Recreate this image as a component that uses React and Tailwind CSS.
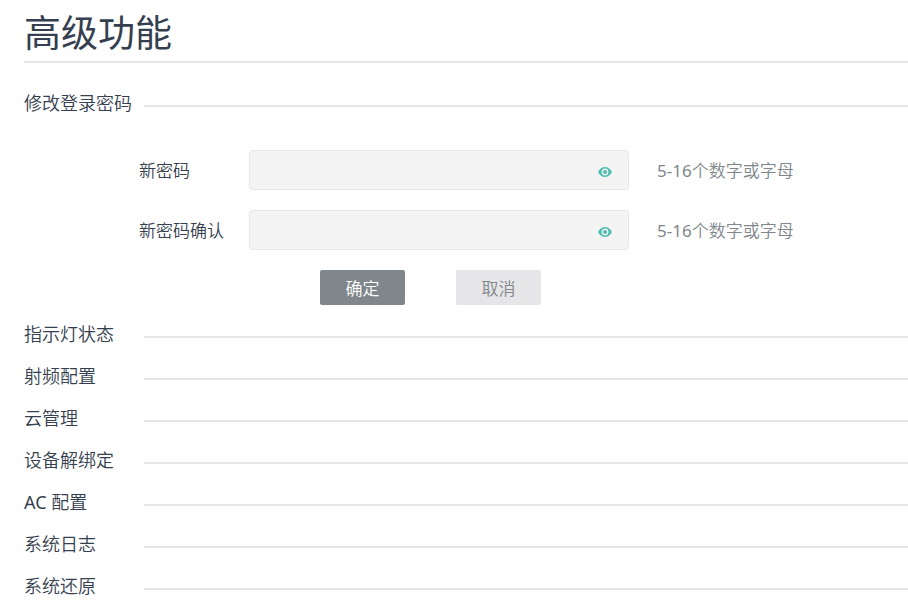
import React, { useState } from 'react';

const sections = [
  { title: '指示灯状态' },
  { title: '射频配置' },
  { title: '云管理' },
  { title: '设备解绑定' },
  { prefix: 'AC ', title: '配置' },
  { title: '系统日志' },
  { title: '系统还原' },
];

const EyeIcon = () => (
  <svg width="14" height="10" viewBox="0 0 14 10" aria-hidden="true">
    <path d="M0 5C1.8 1.7 4.2 0 7 0s5.2 1.7 7 5c-1.8 3.3-4.2 5-7 5S1.8 8.3 0 5Z" fill="#4dbdb1" />
    <circle cx="7" cy="5" r="2.7" fill="#4dbdb1" stroke="#f4f4f4" strokeWidth="1.4" />
  </svg>
);

const SectionHeader = ({ prefix, title, onClick }) => (
  <h2>
    <button type="button" onClick={onClick} className="flex h-[42px] w-full items-center text-left">
      <span className="w-30 shrink-0 pb-1.5 text-lg leading-6">
        {prefix && <span className="font-normal">{prefix}</span>}
        {title}
      </span>
      <span className="h-0.5 flex-1 bg-[#e6e6e7]" />
    </button>
  </h2>
);

const PasswordField = ({ id, label }) => {
  const [value, setValue] = useState('');
  const [visible, setVisible] = useState(false);

  return (
    <div className="flex items-center">
      <label htmlFor={id} className="w-[110px] shrink-0 pt-0.5">
        {label}
      </label>
      <div className="relative w-[380px]">
        <input
          id={id}
          type={visible ? 'text' : 'password'}
          value={value}
          onChange={(e) => setValue(e.target.value)}
          className="block h-10 w-full rounded border border-[#e6e6e7] bg-[#f4f4f4] pr-10 pl-3 outline-none"
        />
        <button
          type="button"
          aria-label={label}
          onClick={() => setVisible(!visible)}
          className="absolute top-[17px] right-[17px]"
        >
          <EyeIcon />
        </button>
      </div>
      <span className="ml-7 pt-0.5 whitespace-nowrap text-[#80878c]">
        <span className="font-normal">5-16</span>个数字或字母
      </span>
    </div>
  );
};

const App = () => {
  const [open, setOpen] = useState(true);

  return (
    <main className="min-h-screen bg-white pl-6 font-['Noto_Sans','Noto_Sans_CJK_SC',sans-serif] font-[350] text-[#353f4f]">
      <h1 className="mb-[22px] border-b-2 border-[#e6e6e7] pt-2 pb-1 text-[37px] leading-[49px] font-normal">
        高级功能
      </h1>

      <SectionHeader title="修改登录密码" onClick={() => setOpen(!open)} />
      {open && (
        <form
          className="flex flex-col gap-5 pt-[23px] pb-[11px] pl-[115px] text-[17px] leading-6"
          onSubmit={(e) => e.preventDefault()}
        >
          <PasswordField id="new-password" label="新密码" />
          <PasswordField id="confirm-password" label="新密码确认" />
          <div className="flex gap-[51px] pl-[181px]">
            <button type="submit" className="h-[35px] w-[85px] rounded-xs bg-[#80878c] pt-0.5 text-white">
              确定
            </button>
            <button type="reset" className="h-[35px] w-[85px] rounded-xs bg-[#e6e6e8] pt-0.5 text-[#80878c]">
              取消
            </button>
          </div>
        </form>
      )}

      {sections.map((section) => (
        <SectionHeader key={section.title} {...section} />
      ))}
    </main>
  );
};

export default App;
